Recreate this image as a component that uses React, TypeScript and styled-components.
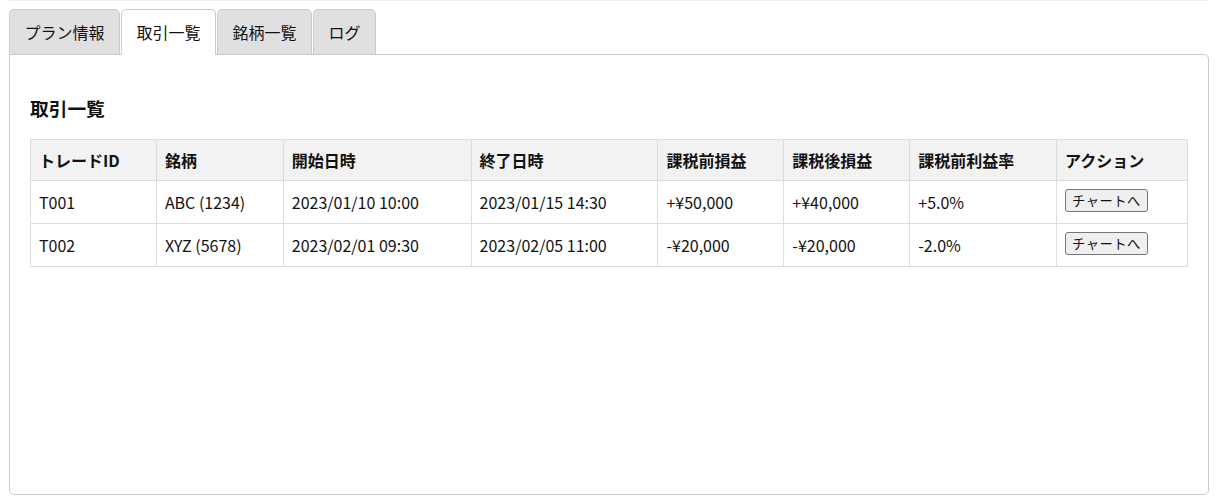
import React, { useState } from "react";
import styled, { createGlobalStyle } from "styled-components";

const GlobalStyle = createGlobalStyle`
  html, body { margin: 0; padding: 0; background: #fff; }
  body {
    font-family: "Noto Sans CJK JP", "Noto Sans", sans-serif;
    font-size: 16px;
    color: #111;
  }
`;

const Page = styled.div`
  margin: 0 9px;
  border-top: 1px solid #eeeeee;
  padding-top: 8px;
`;

const TabBar = styled.div`
  display: flex;
  gap: 1px;
  align-items: flex-end;
`;

const Tab = styled.button<{ $active?: boolean }>`
  font-family: inherit;
  font-size: 16px;
  color: #111;
  line-height: 24px;
  padding: 10px 14.5px;
  border: 1px solid #cccccc;
  border-bottom: ${(p) => (p.$active ? "1px solid #fff" : "1px solid #cccccc")};
  border-radius: 5px 5px 0 0;
  background: ${(p) => (p.$active ? "#ffffff" : "#e0e0e0")};
  margin-bottom: -1px;
  position: relative;
  z-index: ${(p) => (p.$active ? 2 : 1)};
  cursor: pointer;
`;

const Panel = styled.div`
  border: 1px solid #cccccc;
  border-radius: 0 5px 5px 5px;
  padding: 20px;
  height: 399px;
  background: #fff;
`;

const Heading = styled.h3`
  font-size: 18.72px;
  font-weight: 700;
  margin: 18.72px 0;
  line-height: 27px;
`;

const Table = styled.table`
  width: 100%;
  border-collapse: collapse;
  font-size: 16px;
`;

const Th = styled.th`
  text-align: left;
  font-weight: 700;
  background: #f2f2f2;
  border: 1px solid #dddddd;
  padding: 8px 8px;
  line-height: 24px;
`;

const Td = styled.td`
  border: 1px solid #dddddd;
  padding: 8px 8px;
  line-height: 26px;
`;

const ChartButton = styled.button`
  font-family: "Noto Sans CJK JP", sans-serif;
  font-size: 13.33px;
  line-height: 19px;
  padding: 1px 6px;
  background: #efefef;
  color: #111;
  border: 1px solid #767676;
  border-radius: 3px;
  letter-spacing: 0.4px;
  vertical-align: top;
`;

const widths = [126, 127, 188, 187, 126, 126, 147, 131];
const headers = ["トレードID", "銘柄", "開始日時", "終了日時", "課税前損益", "課税後損益", "課税前利益率", "アクション"];
const rows = [
  ["T001", "ABC (1234)", "2023/01/10 10:00", "2023/01/15 14:30", "+¥50,000", "+¥40,000", "+5.0%"],
  ["T002", "XYZ (5678)", "2023/02/01 09:30", "2023/02/05 11:00", "-¥20,000", "-¥20,000", "-2.0%"],
];
const tabs = ["プラン情報", "取引一覧", "銘柄一覧", "ログ"];

export default function App() {
  const [active, setActive] = useState(1);
  return (
    <>
      <GlobalStyle />
      <Page>
        <TabBar>
          {tabs.map((t, i) => (
            <Tab key={t} $active={i === active} onClick={() => setActive(i)}>
              {t}
            </Tab>
          ))}
        </TabBar>
        <Panel>
          <Heading>取引一覧</Heading>
          <Table>
            <colgroup>
              {widths.map((w, i) => (
                <col key={i} style={{ width: w }} />
              ))}
            </colgroup>
            <thead>
              <tr>
                {headers.map((h) => (
                  <Th key={h}>{h}</Th>
                ))}
              </tr>
            </thead>
            <tbody>
              {rows.map((r) => (
                <tr key={r[0]}>
                  {r.map((c, i) => (
                    <Td key={i}>{c}</Td>
                  ))}
                  <Td>
                    <ChartButton>チャートへ</ChartButton>
                  </Td>
                </tr>
              ))}
            </tbody>
          </Table>
        </Panel>
      </Page>
    </>
  );
}
